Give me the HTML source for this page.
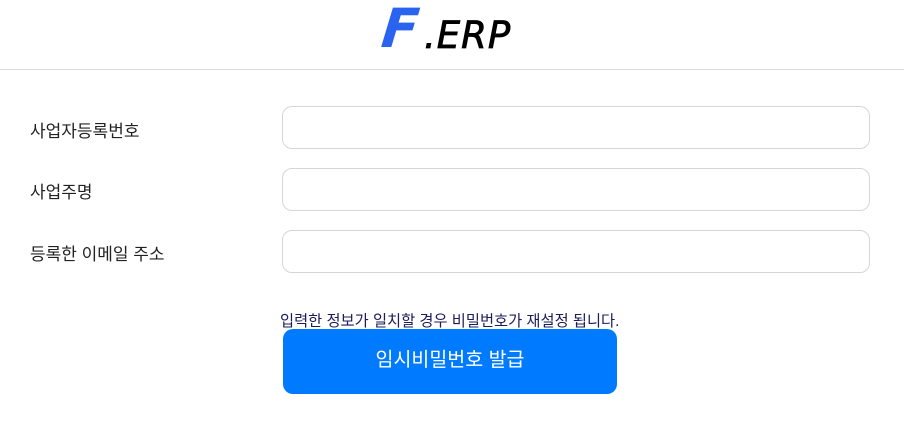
<!DOCTYPE html>
<html><head><meta charset="utf-8"><style>
body{margin:0;width:904px;height:428px;background:#fff;font-family:"Liberation Sans","Noto Sans CJK KR",sans-serif;position:relative;overflow:hidden}
.hdr{position:absolute;left:0;top:0;width:904px;height:69px;border-bottom:1px solid #dcdcdc}
.F{position:absolute;left:382px;top:-3px;font:italic bold 54px "DejaVu Sans",sans-serif;color:#2a63f0;transform:skewX(-6deg)}
.erp{position:absolute;left:424px;top:14px;font:italic 37px "DejaVu Sans",sans-serif;color:#000;letter-spacing:1px;-webkit-text-stroke:0.8px #000}
.lb{position:absolute;left:30px;font-size:17px;color:#222}
.in{position:absolute;left:282px;width:586px;height:41px;border:1px solid #d6d6d6;border-radius:10px;background:#fff}
.note{position:absolute;left:280px;top:309px;font-size:15.3px;color:#1c1c5c}
.btn{position:absolute;left:283px;top:329px;width:334px;height:65px;background:#007bff;border-radius:10px;color:#fff;font-size:19.5px;text-align:center;line-height:62px}
</style></head><body>
<div class="hdr"><span class="F">F</span><span class="erp">.ERP</span></div>
<div class="lb" style="top:117px">사업자등록번호</div>
<div class="in" style="top:106px"></div>
<div class="lb" style="top:178px">사업주명</div>
<div class="in" style="top:168px"></div>
<div class="lb" style="top:240px">등록한 이메일 주소</div>
<div class="in" style="top:230px"></div>
<div class="note">입력한 정보가 일치할 경우 비밀번호가 재설정 됩니다.</div>
<div class="btn">임시비밀번호 발급</div>
</body></html>
